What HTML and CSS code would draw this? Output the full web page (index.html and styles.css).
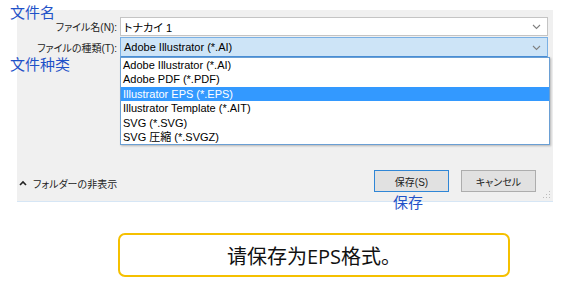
FILE: index.html
```html
<!DOCTYPE HTML>
<html>
<head>
    <title>保存形式</title>
    <meta charset="utf-8" />
    <link rel="stylesheet" href="styles.css">
</head>
<body>

<div class="page">

    <!-- Save dialog -->
    <div class="dialog">
        <div class="row">
            <label class="row-label">ファイル名(N):</label>
            <div class="field">
                <span>トナカイ 1</span>
                <svg class="chevron" width="9" height="6" viewBox="0 0 9 6"><path d="M1 1 L4.5 4.5 L8 1" fill="none" stroke="#808080" stroke-width="1.1"/></svg>
            </div>
        </div>
        <div class="row">
            <label class="row-label">ファイルの種類(T):</label>
            <div class="field field-open">
                <span>Adobe Illustrator (*.AI)</span>
                <svg class="chevron" width="9" height="6" viewBox="0 0 9 6"><path d="M1 1 L4.5 4.5 L8 1" fill="none" stroke="#808080" stroke-width="1.1"/></svg>

                <!-- Open dropdown list -->
                <ul class="type-list">
                    <li>Adobe Illustrator (*.AI)</li>
                    <li>Adobe PDF (*.PDF)</li>
                    <li class="selected">Illustrator EPS (*.EPS)</li>
                    <li>Illustrator Template (*.AIT)</li>
                    <li>SVG (*.SVG)</li>
                    <li>SVG 圧縮 (*.SVGZ)</li>
                </ul>
            </div>
        </div>

        <div class="footer">
            <div class="folder-toggle">
                <svg width="8" height="6" viewBox="0 0 8 6"><path d="M1 5 L4 2 L7 5" fill="none" stroke="#222" stroke-width="1.6"/></svg>
                <span>フォルダーの非表示</span>
            </div>
            <div class="buttons">
                <button class="btn btn-default">保存(S)</button>
                <button class="btn">キャンセル</button>
            </div>
            <svg class="grip" width="8" height="8" viewBox="0 0 8 8">
                <rect x="6" y="0" width="1" height="1" fill="#bbb"/>
                <rect x="3" y="3" width="1" height="1" fill="#bbb"/>
                <rect x="6" y="3" width="1" height="1" fill="#bbb"/>
                <rect x="0" y="6" width="1" height="1" fill="#bbb"/>
                <rect x="3" y="6" width="1" height="1" fill="#bbb"/>
                <rect x="6" y="6" width="1" height="1" fill="#bbb"/>
            </svg>
        </div>
    </div>

    <!-- Annotations -->
    <span class="note note-name">文件名</span>
    <span class="note note-type">文件种类</span>
    <span class="note note-save">保存</span>

    <div class="notice">请保存为EPS格式。</div>
</div>

</body>
</html>
```

FILE: styles.css
```css
/* Base */
body {
    margin: 0;
    background: #ffffff;
    font-family: "Liberation Sans", "Noto Sans CJK JP", sans-serif;
    color: #000;
}

.page {
    position: relative;
    width: 573px;
    height: 292px;
    padding-top: 10px;
    box-sizing: border-box;
}

/* Dialog */
.dialog {
    margin-left: 17px;
    width: 536px;
    height: 192px;
    padding-top: 7px;
    box-sizing: border-box;
    background: #f0f0f0;
    border-bottom: 1px solid #d6e6f5;
    display: flex;
    flex-direction: column;
    gap: 1px;
}

.row {
    display: flex;
    align-items: center;
}

.row-label {
    width: 100px;
    text-align: right;
    padding-right: 3px;
    font-family: "Liberation Sans", "Noto Sans CJK JP", sans-serif;
    font-feature-settings: "palt";
    font-size: 10px;
    color: #222;
    white-space: nowrap;
}

.field {
    position: relative;
    width: 428px;
    height: 19px;
    box-sizing: border-box;
    background: #fff;
    border: 1px solid #c4c4c4;
    display: flex;
    align-items: center;
    padding-left: 3px;
    font-size: 11px;
    font-feature-settings: "palt";
}

.field-open {
    height: 21px;
    background: #cde4f7;
    border: 1px solid #7ab0e4;
    border-bottom: 2px solid #4a90d9;
}

.chevron {
    position: absolute;
    right: 6px;
    top: 6px;
}

.field-open .chevron {
    top: 7px;
}

/* Dropdown list */
.type-list {
    position: absolute;
    left: -1px;
    top: 19px;
    width: 428px;
    margin: 0;
    padding: 0;
    list-style: none;
    background: #fff;
    border: 1px solid #6a9fd4;
    box-shadow: 1px 1px 2px rgba(0,0,0,0.25);
    z-index: 10;
}

.type-list li {
    height: 14.4px;
    line-height: 14px;
    padding-left: 2px;
    font-size: 11px;
    white-space: nowrap;
}

.type-list li.selected {
    background: #3399ff;
    color: #fff;
}

/* Footer */
.footer {
    position: relative;
    margin-top: auto;
    padding: 0 17px 9px 1px;
    display: flex;
    align-items: center;
    justify-content: space-between;
}

.folder-toggle {
    display: flex;
    align-items: center;
    gap: 6px;
    padding-left: 1px;
    padding-top: 4px;
    font-family: "Noto Sans CJK JP", sans-serif;
    font-feature-settings: "palt";
    font-size: 10px;
    color: #222;
}

.buttons {
    display: flex;
    gap: 12px;
}

.btn {
    width: 75px;
    height: 22px;
    padding: 0;
    background: #e1e1e1;
    border: 1px solid #adadad;
    font-family: "Liberation Sans", "Noto Sans CJK JP", sans-serif;
    font-feature-settings: "palt";
    font-size: 10px;
    color: #222;
}

.btn-default {
    border: 1px solid #2f86d6;
}

.grip {
    position: absolute;
    right: 2px;
    bottom: 2px;
}

/* Blue annotation labels */
.note {
    position: absolute;
    font-family: "Noto Sans CJK SC", sans-serif;
    font-size: 15px;
    line-height: 17px;
    color: #1f52c8;
}

.note-name {
    left: 10px;
    top: 3px;
}

.note-type {
    left: 10px;
    top: 55px;
}

.note-save {
    left: 393px;
    top: 193px;
}

/* Notice box */
.notice {
    margin: 31px 0 0 118px;
    width: 392px;
    height: 44px;
    box-sizing: border-box;
    border: 2px solid #f5c000;
    border-radius: 7px;
    display: flex;
    align-items: center;
    justify-content: center;
    font-family: "Open Sans", "Noto Sans CJK SC", sans-serif;
    font-size: 20px;
    color: #111;
}
```
